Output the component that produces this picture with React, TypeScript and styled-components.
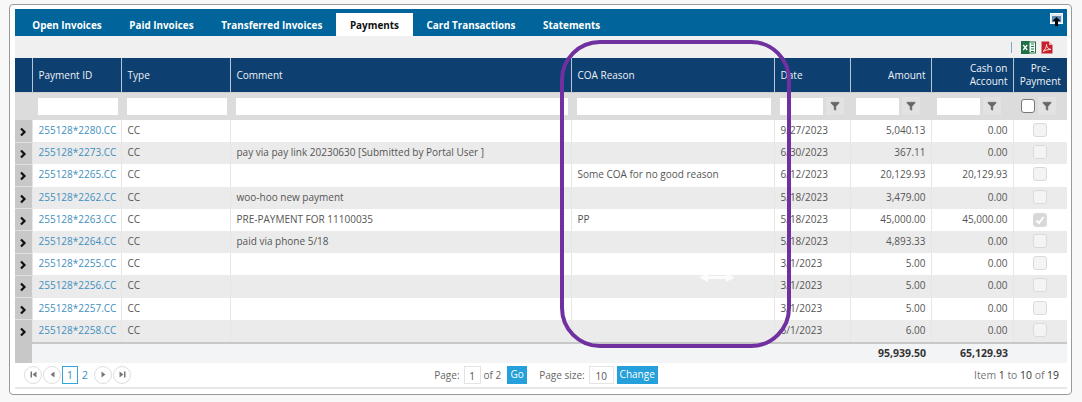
import React from 'react';
import styled, { createGlobalStyle } from 'styled-components';
import { Filter } from 'lucide-react';

const GlobalStyle = createGlobalStyle`
  html, body { margin: 0; padding: 0; background: #f8f8f8; }
  body { font-family: "Open Sans", "Liberation Sans", sans-serif; font-size: 10px; color: #555; overflow: hidden; }
  * { box-sizing: border-box; }
`;

type Payment = {
  id: string;
  comment?: string;
  coa?: string;
  date: string;
  amount: string;
  cash: string;
  checked?: boolean;
};

const payments: Payment[] = [
  { id: '255128*2280.CC', date: '9/27/2023', amount: '5,040.13', cash: '0.00' },
  { id: '255128*2273.CC', comment: 'pay via pay link 20230630 [Submitted by Portal User ]', date: '6/30/2023', amount: '367.11', cash: '0.00' },
  { id: '255128*2265.CC', coa: 'Some COA for no good reason', date: '6/12/2023', amount: '20,129.93', cash: '20,129.93' },
  { id: '255128*2262.CC', comment: 'woo-hoo new payment', date: '5/18/2023', amount: '3,479.00', cash: '0.00' },
  { id: '255128*2263.CC', comment: 'PRE-PAYMENT FOR 11100035', coa: 'PP', date: '5/18/2023', amount: '45,000.00', cash: '45,000.00', checked: true },
  { id: '255128*2264.CC', comment: 'paid via phone 5/18', date: '5/18/2023', amount: '4,893.33', cash: '0.00' },
  { id: '255128*2255.CC', date: '3/1/2023', amount: '5.00', cash: '0.00' },
  { id: '255128*2256.CC', date: '3/1/2023', amount: '5.00', cash: '0.00' },
  { id: '255128*2257.CC', date: '3/1/2023', amount: '5.00', cash: '0.00' },
  { id: '255128*2258.CC', date: '6/1/2023', amount: '6.00', cash: '0.00' },
];

const tabs = ['Open Invoices', 'Paid Invoices', 'Transferred Invoices', 'Payments', 'Card Transactions', 'Statements'];
const columnWidths = [17, 89, 109, 341, 203, 76, 81, 82, 54];

const Page = styled.div`
  width: 1082px;
  height: 402px;
  padding: 4px 0 0 9px;
  position: relative;
`;

const Panel = styled.div`
  width: 1063px;
  height: 391px;
  padding: 4px 4px 0 5px;
  background: #fff;
  border: 1px solid #9a9a9a;
  border-radius: 4px;
`;

const TabBar = styled.div`
  height: 27px;
  background: #01659b;
  display: flex;
  align-items: flex-end;
  padding-left: 3.5px;
  position: relative;
`;

const Tab = styled.div<{ $active?: boolean }>`
  height: 23px;
  padding: 0 13.8px;
  line-height: 24px;
  font-weight: 700;
  font-size: 9.9px;
  color: ${(p) => (p.$active ? '#111' : '#fff')};
  background: ${(p) => (p.$active ? '#fff' : 'transparent')};
`;

const PopoutIcon = styled.svg`
  position: absolute;
  right: 4px;
  top: 4px;
`;

const Toolbar = styled.div`
  height: 22px;
  background: #f0f0f0;
  display: flex;
  align-items: center;
  justify-content: flex-end;
  gap: 5px;
  padding-right: 14px;
`;

const Divider = styled.span`
  width: 1px;
  height: 11px;
  background: #7aa9c4;
  margin-right: 4px;
`;

const Grid = styled.table`
  width: 1052px;
  border-collapse: collapse;
  table-layout: fixed;
`;

const HeadCell = styled.th<{ $right?: boolean; $center?: boolean }>`
  height: 34px;
  padding: 1px ${(p) => (p.$right ? '5px' : '6px')} 0 6px;
  background: #0d3f71;
  color: #eef2f6;
  font-weight: 400;
  font-size: 10px;
  line-height: 13px;
  text-align: ${(p) => (p.$center ? 'center' : p.$right ? 'right' : 'left')};
  border-left: 1px solid #b8c6d4;
  &:first-child { border-left: 0; }
`;

const FilterCell = styled.td`
  height: 28px;
  padding: 0 3px 0 6px;
  background: #dcdcdc;
  border-top: 1px solid #d0d0d0;
`;

const FilterWrap = styled.div<{ $inset?: boolean }>`
  display: flex;
  align-items: center;
  gap: 3px;
  padding-left: ${(p) => (p.$inset ? '2px' : '0')};
`;

const FilterInput = styled.div<{ $width?: number }>`
  height: 17px;
  background: #fff;
  flex: ${(p) => (p.$width ? `0 0 ${p.$width}px` : '1 1 auto')};
`;

const FilterButton = styled.div`
  width: 18px;
  height: 18px;
  display: flex;
  align-items: center;
  justify-content: center;
  background: #e2e2e2;
  color: #666;
  flex: none;
`;

const FilterCheck = styled.div`
  width: 14px;
  height: 14px;
  background: #fff;
  border: 1px solid #777;
  border-radius: 3px;
  flex: none;
`;

const Row = styled.tr<{ $alt: boolean }>`
  background: ${(p) => (p.$alt ? '#ebebeb' : '#fff')};
`;

const Cell = styled.td<{ $right?: boolean; $center?: boolean }>`
  height: 22.2px;
  padding: 0 ${(p) => (p.$right ? '5px' : '6px')} 2px 6px;
  font-size: 10px;
  color: #555;
  white-space: nowrap;
  overflow: hidden;
  text-align: ${(p) => (p.$center ? 'center' : p.$right ? 'right' : 'left')};
  border-left: 1px solid #e6e6e6;
  &:first-child { border-left: 0; }
`;

const ExpandCell = styled.td`
  height: 22.2px;
  padding: 2px 0 0;
  background: #c8c8c8;
  border-bottom: 1px solid #e0e0e0;
  text-align: center;
  line-height: 0;
`;

const IdLink = styled.a`
  color: #3f8fc0;
`;

const RowCheck = styled.span<{ $checked?: boolean }>`
  display: inline-flex;
  width: 14px;
  height: 14px;
  margin-top: 3px;
  align-items: center;
  justify-content: center;
  background: ${(p) => (p.$checked ? '#d8d8d8' : '#f4f4f4')};
  border: 1px solid #dadada;
  border-radius: 3px;
`;

const TotalRow = styled.tr`
  background: #f3f4f6;
  border-top: 2px solid #c8c8c8;
`;

const TotalCell = styled.td<{ $grey?: boolean }>`
  height: 20px;
  padding: 0 5px 0 6px;
  text-align: right;
  font-weight: 700;
  font-size: 10.5px;
  color: #333;
  background: ${(p) => (p.$grey ? '#c8c8c8' : 'transparent')};
`;

const Pager = styled.div`
  width: 1052px;
  height: 26px;
  padding: 0 8px 0 9px;
  display: grid;
  grid-template-columns: 1fr auto 1fr;
  align-items: center;
  border-bottom: 2px solid #e8e8e8;
`;

const PagerNav = styled.div`
  display: flex;
  align-items: center;
`;

const NavCircle = styled.span`
  width: 18px;
  height: 18px;
  margin-right: 1px;
  border: 1px solid #dedede;
  border-radius: 50%;
  display: flex;
  align-items: center;
  justify-content: center;
`;

const PageCurrent = styled.span`
  width: 16px;
  height: 18px;
  line-height: 16px;
  text-align: center;
  font-size: 11px;
  color: #3f8fc0;
  border: 1px solid #35a3dc;
`;

const PageLink = styled.span`
  width: 14px;
  margin-right: 2px;
  text-align: center;
  font-size: 11px;
  color: #3f8fc0;
`;

const PagerCenter = styled.div`
  display: flex;
  align-items: center;
  color: #666;
  margin-left: 9px;
`;

const PagerBox = styled.span<{ $width: number }>`
  width: ${(p) => p.$width}px;
  height: 18px;
  margin: 0 3px 0 4px;
  line-height: 18px;
  text-align: center;
  color: #555;
  border: 1px solid #e4e4e4;
`;

const PagerButton = styled.span<{ $width: number; $gap?: number; $offset?: number }>`
  width: ${(p) => p.$width}px;
  height: 18px;
  margin-left: ${(p) => p.$offset ?? 0}px;
  margin-right: ${(p) => p.$gap ?? 0}px;
  line-height: 16px;
  text-align: center;
  color: #fff;
  background: #25a0da;
`;

const ItemCount = styled.div`
  text-align: right;
  color: #777;
  font-size: 10.4px;
  & b { font-weight: 400; color: #333; }
`;

const Highlight = styled.div`
  position: absolute;
  left: 560px;
  top: 40px;
  width: 231px;
  height: 308px;
  border: 4px solid #7030a0;
  border-radius: 40px;
  pointer-events: none;
`;

const ResizeCursor = styled.svg`
  position: absolute;
  left: 698px;
  top: 273px;
  pointer-events: none;
`;

const ExpandArrow = () => (
  <svg width="8" height="10" viewBox="0 0 8 10">
    <path d="M2 1.5 L5.5 5 L2 8.5" fill="none" stroke="#111" strokeWidth="2.2" />
  </svg>
);

const FilterIcon = () => <Filter size={10} fill="#666" strokeWidth={1.5} />;

const NavIcon: React.FC<{ d: string }> = ({ d }) => (
  <svg width="7" height="7" viewBox="0 0 7 7">
    <path d={d} fill="#777" />
  </svg>
);

const App: React.FC = () => {
  return (
    <Page>
      <GlobalStyle />
      <Panel>
        <TabBar>
          {tabs.map((tab) => (
            <Tab key={tab} $active={tab === 'Payments'}>
              {tab}
            </Tab>
          ))}
          <PopoutIcon width="13" height="14" viewBox="0 0 13 14">
            <rect x="0.5" y="0.5" width="12" height="10" fill="#dfe8ef" stroke="#fff" />
            <rect x="2" y="3" width="9" height="6" fill="#5b8db5" />
            <path d="M6.5 4 L10.5 8 H8 V13 H5 V8 H2.5 Z" fill="#000" />
          </PopoutIcon>
        </TabBar>
        <Toolbar>
          <Divider />
          <svg width="15" height="13" viewBox="0 0 15 13">
            <rect x="5.5" y="1" width="9" height="11" fill="#fff" stroke="#1e7145" />
            <path d="M10 3h3M10 5.5h3M10 8h3M10 10.5h3" stroke="#1e7145" />
            <rect x="0" y="0" width="8.5" height="13" fill="#1e7145" />
            <path d="M2.2 4 L6.2 9 M6.2 4 L2.2 9" stroke="#fff" strokeWidth="1.3" />
          </svg>
          <svg width="12" height="13" viewBox="0 0 12 13">
            <path d="M0.5 0.5 H8 L11.5 4 V12.5 H0.5 Z" fill="#c8202a" />
            <path d="M8 0.5 V4 H11.5" fill="#f0b5b5" />
            <path d="M2 10.5 C4 9 5.5 6 5.5 3.5 C5.5 6 7 8 10 8.5 C7.5 8.5 4.5 9 2 10.5 Z" fill="none" stroke="#fff" strokeWidth="0.8" />
          </svg>
        </Toolbar>
        <Grid>
          <colgroup>
            {columnWidths.map((width, i) => (
              <col key={i} style={{ width }} />
            ))}
          </colgroup>
          <thead>
            <tr>
              <HeadCell />
              <HeadCell>Payment ID</HeadCell>
              <HeadCell>Type</HeadCell>
              <HeadCell>Comment</HeadCell>
              <HeadCell>COA Reason</HeadCell>
              <HeadCell>Date</HeadCell>
              <HeadCell $right>Amount</HeadCell>
              <HeadCell $right>
                Cash on
                <br />
                Account
              </HeadCell>
              <HeadCell $center>
                Pre-
                <br />
                Payment
              </HeadCell>
            </tr>
            <tr>
              <FilterCell />
              <FilterCell>
                <FilterInput />
              </FilterCell>
              <FilterCell>
                <FilterInput />
              </FilterCell>
              <FilterCell>
                <FilterInput />
              </FilterCell>
              <FilterCell>
                <FilterInput />
              </FilterCell>
              <FilterCell>
                <FilterWrap>
                  <FilterInput $width={43} />
                  <FilterButton>
                    <FilterIcon />
                  </FilterButton>
                </FilterWrap>
              </FilterCell>
              <FilterCell>
                <FilterWrap>
                  <FilterInput $width={43} />
                  <FilterButton>
                    <FilterIcon />
                  </FilterButton>
                </FilterWrap>
              </FilterCell>
              <FilterCell>
                <FilterWrap>
                  <FilterInput $width={43} />
                  <FilterButton>
                    <FilterIcon />
                  </FilterButton>
                </FilterWrap>
              </FilterCell>
              <FilterCell>
                <FilterWrap $inset>
                  <FilterCheck />
                  <FilterButton>
                    <FilterIcon />
                  </FilterButton>
                </FilterWrap>
              </FilterCell>
            </tr>
          </thead>
          <tbody>
            {payments.map((payment, i) => (
              <Row key={payment.id} $alt={i % 2 === 1}>
                <ExpandCell>
                  <ExpandArrow />
                </ExpandCell>
                <Cell>
                  <IdLink>{payment.id}</IdLink>
                </Cell>
                <Cell>CC</Cell>
                <Cell>{payment.comment}</Cell>
                <Cell>{payment.coa}</Cell>
                <Cell>{payment.date}</Cell>
                <Cell $right>{payment.amount}</Cell>
                <Cell $right>{payment.cash}</Cell>
                <Cell $center>
                  <RowCheck $checked={payment.checked}>
                    {payment.checked && (
                      <svg width="10" height="10" viewBox="0 0 10 10">
                        <path d="M1.5 5.5 L4 8 L8.5 2" fill="none" stroke="#fff" strokeWidth="2" />
                      </svg>
                    )}
                  </RowCheck>
                </Cell>
              </Row>
            ))}
          </tbody>
          <tfoot>
            <TotalRow>
              <TotalCell $grey />
              <TotalCell />
              <TotalCell />
              <TotalCell />
              <TotalCell />
              <TotalCell />
              <TotalCell>95,939.50</TotalCell>
              <TotalCell>65,129.93</TotalCell>
              <TotalCell />
            </TotalRow>
          </tfoot>
        </Grid>
        <Pager>
          <PagerNav>
            <NavCircle>
              <NavIcon d="M0.5 0.5 H2 V6.5 H0.5 Z M6.5 0.5 V6.5 L2.5 3.5 Z" />
            </NavCircle>
            <NavCircle>
              <NavIcon d="M5.5 0.5 V6.5 L1.5 3.5 Z" />
            </NavCircle>
            <PageCurrent>1</PageCurrent>
            <PageLink>2</PageLink>
            <NavCircle>
              <NavIcon d="M1.5 0.5 V6.5 L5.5 3.5 Z" />
            </NavCircle>
            <NavCircle>
              <NavIcon d="M0.5 0.5 V6.5 L4.5 3.5 Z M5 0.5 H6.5 V6.5 H5 Z" />
            </NavCircle>
          </PagerNav>
          <PagerCenter>
            Page:
            <PagerBox $width={17}>1</PagerBox>
            of 2
            <PagerButton $width={20} $offset={6} $gap={12}>
              Go
            </PagerButton>
            Page size:
            <PagerBox $width={25}>10</PagerBox>
            <PagerButton $width={41}>Change</PagerButton>
          </PagerCenter>
          <ItemCount>
            Item <b>1</b> to <b>10</b> of <b>19</b>
          </ItemCount>
        </Pager>
      </Panel>
      <Highlight />
      <ResizeCursor width="38" height="10" viewBox="0 0 38 10">
        <path d="M1 4.5 L10 0 V3 H28 V0 L37 4.5 L28 9 V6 H10 V9 Z" fill="#fff" opacity="0.85" />
      </ResizeCursor>
    </Page>
  );
};

export default App;
